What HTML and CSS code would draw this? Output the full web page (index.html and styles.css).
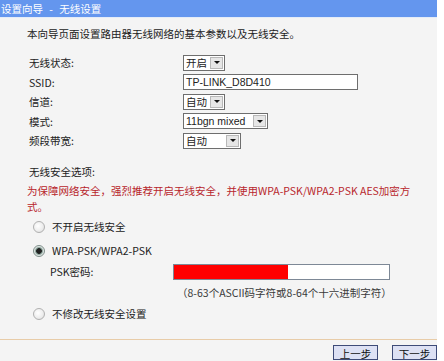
FILE: index.html
```html
<!DOCTYPE html>
<html lang="zh-CN">
<head>
  <meta charset="UTF-8" />
  <title>设置向导 - 无线设置</title>
  <link rel="stylesheet" href="styles.css">
</head>
<body>
  <div class="panel">
    <div class="header">设置向导 - 无线设置</div>

    <div class="content">
      <p class="intro">本向导页面设置路由器无线网络的基本参数以及无线安全。</p>

      <div class="fields">
        <div class="row">
          <span class="label">无线状态:</span>
          <span class="select w-state"><span class="val">开启</span><span class="arrow"></span></span>
        </div>
        <div class="row">
          <span class="label">SSID:</span>
          <span class="text-input w-ssid">TP-LINK_D8D410</span>
        </div>
        <div class="row">
          <span class="label">信道:</span>
          <span class="select w-state"><span class="val">自动</span><span class="arrow"></span></span>
        </div>
        <div class="row">
          <span class="label">模式:</span>
          <span class="select w-mode"><span class="val latin">11bgn mixed</span><span class="arrow"></span></span>
        </div>
        <div class="row">
          <span class="label">频段带宽:</span>
          <span class="select w-band"><span class="val">自动</span><span class="arrow"></span></span>
        </div>
      </div>

      <div class="sec-title">无线安全选项:</div>
      <p class="warn">为保障网络安全，强烈推荐开启无线安全，并使用WPA-PSK/WPA2-PSK AES加密方式。</p>

      <div class="radio-row first">
        <span class="radio"></span>
        <span>不开启无线安全</span>
      </div>
      <div class="radio-row second">
        <span class="radio checked"></span>
        <span>WPA-PSK/WPA2-PSK</span>
      </div>
      <div class="psk-row">
        <span class="psk-label">PSK密码:</span>
        <span class="psk-input"><span class="redact"></span></span>
      </div>
      <div class="hint">（8-63个ASCII码字符或8-64个十六进制字符）</div>
      <div class="radio-row third">
        <span class="radio"></span>
        <span>不修改无线安全设置</span>
      </div>
    </div>

    <div class="footer">
      <button class="btn">上一步</button>
      <button class="btn">下一步</button>
    </div>
  </div>
</body>
</html>
```

FILE: styles.css
```css
body {
  margin: 0;
  background: #fff;
  font-family: "Noto Sans CJK SC", "DejaVu Sans", sans-serif;
  font-size: 10.5px;
  color: #222;
  overflow: hidden;
}

.panel {
  width: 437px;
  height: 361px;
  background: #f4f4f4;
}

.header {
  height: 17px;
  line-height: 17px;
  padding-left: 1px;
  background: #6496ee;
  color: #fff;
  word-spacing: 4px;
  border-bottom: 1px solid #e4ecf8;
}

.content {
  padding-left: 27px;
}

.intro {
  margin: 0;
  padding-top: 8px;
  line-height: 16px;
}

.fields {
  margin-top: 11px;
}

.row {
  height: 19.5px;
  display: flex;
  align-items: center;
}

.label {
  width: 154px;
  padding-left: 2px;
}

.select, .text-input {
  height: 16px;
  box-sizing: border-box;
  border: 1px solid #6e6e6e;
  background: #fff;
  display: flex;
  align-items: center;
  justify-content: space-between;
  padding: 0 1px 0 2px;
}

.w-state { width: 42px; }
.w-mode { width: 85px; }
.w-band { width: 58px; }
.w-ssid { width: 175px; font-family: "Liberation Sans", sans-serif; font-size: 10.5px; }

.val.latin { font-family: "Liberation Sans", sans-serif; }

.arrow {
  width: 13px;
  height: 12px;
  box-sizing: border-box;
  border: 1px solid #b8b8b8;
  background: #e6e6e6;
  display: flex;
  align-items: center;
  justify-content: center;
}

.arrow::after {
  content: "";
  border-left: 3px solid transparent;
  border-right: 3px solid transparent;
  border-top: 3px solid #111;
}

.sec-title {
  margin-top: 13px;
  line-height: 16px;
  padding-left: 2px;
}

.warn {
  margin: 3px 0 0 0;
  width: 384px;
  line-height: 16.5px;
  color: #b8262c;
}

.radio-row {
  height: 20px;
  display: flex;
  align-items: center;
  gap: 7px;
  padding-left: 6px;
}

.radio-row.first { margin-top: 1px; }
.radio-row.second { margin-top: 4px; }
.radio-row.third { margin-top: 3px; }

.radio {
  width: 12px;
  height: 12px;
  box-sizing: border-box;
  border-radius: 50%;
  border: 1px solid #b0b0b0;
  background: radial-gradient(circle at 40% 40%, #fff 0%, #ececec 60%, #d6d6d6 100%);
}

.radio.checked {
  border-color: #7f8f8a;
  background: radial-gradient(circle, #222 0 2.5px, #6f8a80 3px, #dfe6e4 4.5px, #eee 100%);
}

.psk-row {
  height: 20px;
  margin-top: 1px;
  display: flex;
  align-items: center;
  padding-left: 23px;
}

.psk-label {
  width: 123px;
}

.psk-input {
  width: 217px;
  height: 16px;
  box-sizing: border-box;
  border: 1px solid #7d8896;
  background: #fff;
  display: flex;
}

.redact {
  width: 114px;
  background: #f00;
}

.hint {
  margin-top: 3px;
  padding-left: 150px;
  line-height: 16px;
  color: #3a3a3a;
}

.footer {
  margin-top: 15px;
  border-top: 1px solid #e8cca8;
  display: flex;
  justify-content: flex-end;
  gap: 14px;
  padding-top: 5px;
}

.btn {
  width: 45px;
  height: 15px;
  line-height: 13px;
  padding: 0;
  font: inherit;
  color: #111;
  background: #dde1f4;
  border: 1px solid #3e4b78;
}
```
